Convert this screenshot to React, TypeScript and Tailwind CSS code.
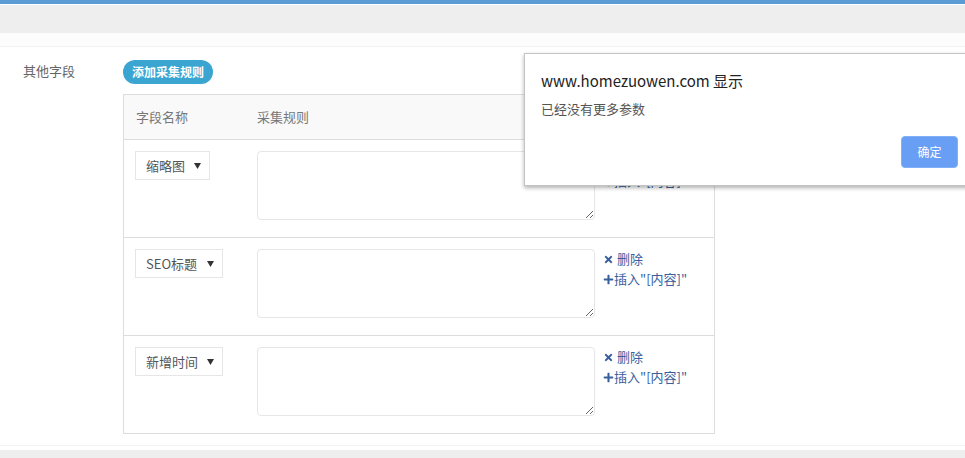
import { FaTimes, FaPlus } from "react-icons/fa";

type Row = { field: string; width: string };

const rows: Row[] = [
  { field: "缩略图", width: "w-[75px]" },
  { field: "SEO标题", width: "w-[88px]" },
  { field: "新增时间", width: "w-[88px]" },
];

function FieldSelect({ field, width }: Row) {
  return (
    <div
      className={`${width} h-[29px] flex items-center justify-between border border-[#e6e6e6] bg-white pl-[10px] pr-[8px] text-[13px] text-[#555]`}
    >
      <span>{field}</span>
      <svg width="7" height="6" viewBox="0 0 7 6" className="fill-[#333]">
        <path d="M0 0h7L3.5 6z" />
      </svg>
    </div>
  );
}

function RuleRow({ row }: { row: Row }) {
  return (
    <div className="flex h-[98px] border-t border-[#dddddd]">
      <div className="w-[133px] pl-[11px] pt-[11px]">
        <FieldSelect {...row} />
      </div>
      <div className="pt-[11px]">
        <textarea
          className="block w-[338px] h-[69px] rounded-[4px] border border-[#e6e6e6] bg-white outline-none"
          defaultValue=""
        />
      </div>
      <div className="pl-[8px] pt-[11px] text-[13px] leading-[20px] text-[#38609f]">
        <div className="flex items-center gap-[3px]">
          <FaTimes className="w-[11px] h-[11px]" />
          <span>删除</span>
        </div>
        <div className="flex items-center">
          <FaPlus className="w-[11px] h-[11px]" />
          <span>插入"[内容]"</span>
        </div>
      </div>
    </div>
  );
}

export default function App() {
  return (
    <div
      className="relative w-[965px] h-[458px] overflow-hidden bg-white"
      style={{ fontFamily: '"Microsoft YaHei", "Noto Sans CJK SC", sans-serif' }}
    >
      {/* page chrome */}
      <div className="h-[4px] bg-[#5b9bd5]" />
      <div className="h-[1px] bg-white" />
      <div className="h-[28px] bg-[#eeeeee]" />
      <div className="h-[14px] bg-[#fcfcfc] border-b border-[#f1f1f1]" />

      {/* other fields form row */}
      <div className="flex h-[398px]">
        <div className="w-[123px] pl-[23px] pt-[14px] text-[13px] text-[#666]">其他字段</div>
        <div className="pt-[11px]">
          <button className="h-[24px] w-[90px] rounded-full bg-[#3ba5d2] text-[12px] font-bold text-white">
            添加采集规则
          </button>
          <div className="mt-[10px] w-[592px] border border-[#dddddd]">
            <div className="flex h-[44px] items-center bg-[#f9f9f9] text-[13px] text-[#777]">
              <div className="w-[133px] pl-[12px]">字段名称</div>
              <div>采集规则</div>
            </div>
            {rows.map((row) => (
              <RuleRow key={row.field} row={row} />
            ))}
          </div>
        </div>
      </div>

      {/* footer band */}
      <div className="h-[5px] border-t border-[#f3f3f3] bg-white" />
      <div className="h-[10px] bg-[#eeeeee]" />

      {/* browser alert */}
      <div className="absolute left-[524px] top-[53px] w-[460px] h-[133px] border border-[#c4c4c4] bg-white shadow-[0_2px_4px_rgba(0,0,0,0.3)]">
        <div className="pl-[16px] pt-[16px] text-[15px] leading-[22px] text-[#222]">
          www.homezuowen.com 显示
        </div>
        <div className="pl-[16px] pt-[8px] text-[13px] leading-[18px] text-[#555]">
          已经没有更多参数
        </div>
        <div className="pl-[376px] pt-[18px]">
          <button className="h-[32px] w-[57px] rounded-[4px] border border-[#7fb0f8] bg-[#699ef5] text-[12px] text-white">
            确定
          </button>
        </div>
      </div>
    </div>
  );
}
